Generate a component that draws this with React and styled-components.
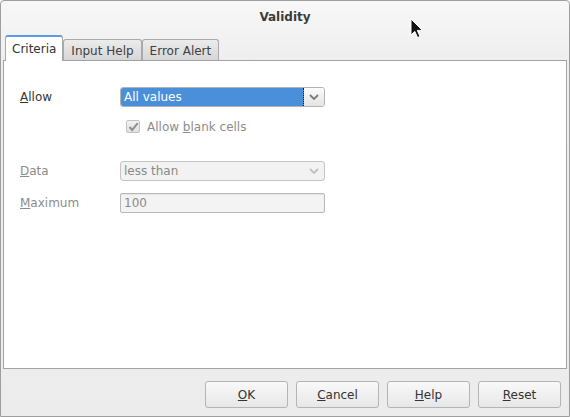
import React from 'react'
import styled, { createGlobalStyle } from 'styled-components'

const Global = createGlobalStyle`
  html, body {
    margin: 0;
    padding: 0;
    background: #ffffff;
  }
  * {
    box-sizing: border-box;
  }
`

const Window = styled.div`
  position: relative;
  width: 570px;
  height: 417px;
  display: flex;
  flex-direction: column;
  border: 1px solid #9e9e9e;
  border-radius: 4px 4px 0 0;
  background: linear-gradient(#f8f8f8, #eeeeee 60px, #ececec);
  font-family: 'DejaVu Sans', 'Liberation Sans', sans-serif;
  font-size: 12px;
  color: #3c3c3c;
  overflow: hidden;
`

const TitleBar = styled.div`
  height: 34px;
  line-height: 32px;
  text-align: center;
  font-weight: bold;
  font-size: 12px;
  color: #3b3b3b;
`

const TabRow = styled.div`
  display: flex;
  align-items: flex-end;
  height: 25px;
  padding: 0 4px;
`

const Tab = styled.div`
  position: relative;
  z-index: 1;
  height: ${p => (p.$active ? '26px' : '21px')};
  margin-bottom: ${p => (p.$active ? '-1px' : '0')};
  padding: ${p => (p.$active ? '0 6px' : '1px 7px 0')};
  display: flex;
  align-items: center;
  border: 1px solid #a9a9a9;
  border-bottom: none;
  border-radius: 3px 3px 0 0;
  background: ${p =>
    p.$active ? '#ffffff' : 'linear-gradient(#ececec, #d6d6d6)'};
  border-top: ${p => (p.$active ? '2px solid #5b9be0' : '1px solid #a9a9a9')};
  color: ${p => (p.$active ? '#333' : '#404040')};
`

const Panel = styled.div`
  margin: 0 2px;
  height: 309px;
  background: #ffffff;
  border: 1px solid #a3a3a3;
  padding: 26px 0 0 16px;
  display: flex;
  flex-direction: column;
`

const Row = styled.div`
  display: flex;
  align-items: center;
  height: ${p => p.$h || 20}px;
  margin-top: ${p => p.$mt || 0}px;
`

const Label = styled.div`
  width: 100px;
  color: ${p => (p.$disabled ? '#8c8c8c' : '#363636')};
`

const U = styled.span`
  text-decoration: underline;
`

const Combo = styled.div`
  width: 205px;
  height: 20px;
  display: flex;
  border: 1px solid ${p => (p.$disabled ? '#c4c4c4' : '#b3b3b3')};
  border-radius: 3px;
  background: ${p => (p.$disabled ? '#f2f2f2' : '#ffffff')};
  overflow: hidden;
`

const ComboValue = styled.div`
  flex: 1;
  display: flex;
  align-items: center;
  padding-left: 3px;
  background: ${p => (p.$selected ? '#4a8fd9' : 'transparent')};
  color: ${p => (p.$selected ? '#ffffff' : '#8a8a8a')};
  border-right: ${p => (p.$selected ? '1px dotted #1a1a1a' : 'none')};
`

const ComboButton = styled.div`
  width: 20px;
  display: flex;
  align-items: center;
  justify-content: center;
  background: ${p =>
    p.$disabled ? 'transparent' : 'linear-gradient(#fbfbfb, #e4e4e4)'};
`

const CheckRow = styled.div`
  display: flex;
  align-items: center;
  gap: 7px;
  margin-left: 106px;
  color: #8c8c8c;
`

const CheckBox = styled.div`
  width: 14px;
  height: 13px;
  display: flex;
  align-items: center;
  justify-content: center;
  border: 1px solid #c2c2c2;
  border-radius: 2px;
  background: linear-gradient(#f2f2f2, #e0e0e0);
`

const Input = styled.div`
  width: 205px;
  height: 20px;
  display: flex;
  align-items: center;
  padding-left: 3px;
  border: 1px solid #b8b8b8;
  border-radius: 2px;
  background: #f3f3f3;
  box-shadow: inset 0 1px 1px rgba(0, 0, 0, 0.06);
  color: #8a8a8a;
`

const Footer = styled.div`
  flex: 1;
  display: flex;
  justify-content: flex-end;
  align-items: flex-start;
  gap: 8px;
  padding: 12px 8px 0 0;
`

const Button = styled.div`
  width: 83px;
  height: 27px;
  display: flex;
  align-items: center;
  justify-content: center;
  border: 1px solid #b4b4b4;
  border-radius: 3px;
  background: linear-gradient(#f9f9f9, #e7e7e7);
  color: #333333;
`

const Cursor = styled.svg`
  position: absolute;
  left: 409px;
  top: 17px;
`

const Chevron = ({ color }) => (
  <svg width="10" height="6" viewBox="0 0 10 6">
    <path d="M1 1 L5 5 L9 1" fill="none" stroke={color} strokeWidth="1.8" />
  </svg>
)

export default function App() {
  return (
    <>
      <Global />
      <Window>
        <TitleBar>Validity</TitleBar>
        <TabRow>
          <Tab $active>Criteria</Tab>
          <Tab>Input Help</Tab>
          <Tab>Error Alert</Tab>
        </TabRow>
        <Panel>
          <Row>
            <Label>
              <U>A</U>llow
            </Label>
            <Combo>
              <ComboValue $selected>All values</ComboValue>
              <ComboButton>
                <Chevron color="#7a7a7a" />
              </ComboButton>
            </Combo>
          </Row>
          <Row $mt={13} $h={13}>
            <CheckRow>
              <CheckBox>
                <svg width="11" height="10" viewBox="0 0 11 10">
                  <path
                    d="M1.5 5 L4.2 8 L9.8 1.2"
                    fill="none"
                    stroke="#8e8e8e"
                    strokeWidth="2"
                  />
                </svg>
              </CheckBox>
              <span>
                Allow <U>b</U>lank cells
              </span>
            </CheckRow>
          </Row>
          <Row $mt={28}>
            <Label $disabled>
              <U>D</U>ata
            </Label>
            <Combo $disabled>
              <ComboValue>less than</ComboValue>
              <ComboButton $disabled>
                <Chevron color="#c0c0c0" />
              </ComboButton>
            </Combo>
          </Row>
          <Row $mt={12}>
            <Label $disabled>
              <U>M</U>aximum
            </Label>
            <Input>100</Input>
          </Row>
        </Panel>
        <Footer>
          <Button>
            <span>
              <U>O</U>K
            </span>
          </Button>
          <Button>
            <span>
              <U>C</U>ancel
            </span>
          </Button>
          <Button>
            <span>
              <U>H</U>elp
            </span>
          </Button>
          <Button>
            <span>
              <U>R</U>eset
            </span>
          </Button>
        </Footer>
        <Cursor width="14" height="22" viewBox="0 0 14 22">
          <path
            d="M1 1 L1 17 L4.8 13.4 L7.6 19.6 L10 18.5 L7.3 12.4 L12.4 12.4 Z"
            fill="#111"
            stroke="#ffffff"
            strokeWidth="1"
            strokeLinejoin="round"
          />
        </Cursor>
      </Window>
    </>
  )
}
